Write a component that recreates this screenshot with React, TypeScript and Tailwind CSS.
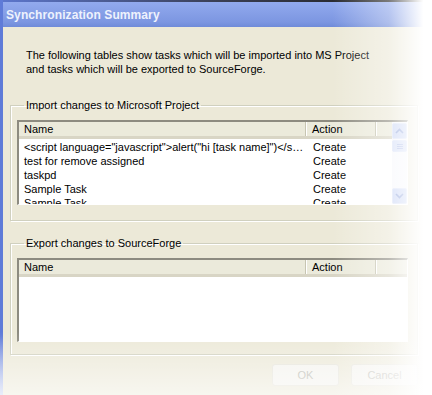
import React from 'react';

const importRows = [
  { name: '<script language="javascript">alert("hi [task name]")</sc...', action: 'Create' },
  { name: 'test for remove assigned', action: 'Create' },
  { name: 'taskpd', action: 'Create' },
  { name: 'Sample Task', action: 'Create' },
  { name: 'Sample Task', action: 'Create' },
];

const ListHeader = ({ withScroll }: { withScroll: boolean }) => (
  <div className="flex h-[17px] bg-[#ebeadb] border-b-[3px] border-[#d8d5c5] text-black">
    <div className="w-[287px] pl-[5px] leading-[14px] border-r border-[#c7c5b2] shadow-[1px_0_0_#fff]">Name</div>
    <div className="w-[70px] pl-[6px] leading-[14px] border-r border-[#c7c5b2] shadow-[1px_0_0_#fff]">Action</div>
    {!withScroll && <div className="flex-1" />}
  </div>
);

const ScrollBar = () => (
  <div className="flex w-[15px] flex-col bg-[#f7f8fc] pt-[1px]">
    <div className="flex h-[16px] items-center justify-center rounded-[2px] bg-[#c9d5f5] border border-[#dbe3f8]">
      <svg width="9" height="6" viewBox="0 0 9 6">
        <path d="M1 5 L4.5 1.5 L8 5" stroke="#8a9fd8" strokeWidth="1.6" fill="none" />
      </svg>
    </div>
    <div className="mt-[1px] flex h-[12px] flex-col items-center justify-center gap-[1px] rounded-[2px] bg-[#d3ddf7] border border-[#dbe3f8]">
      <div className="h-px w-[6px] bg-[#aab9e6]" />
      <div className="h-px w-[6px] bg-[#aab9e6]" />
      <div className="h-px w-[6px] bg-[#aab9e6]" />
    </div>
    <div className="flex-1" />
    <div className="flex h-[16px] items-center justify-center rounded-[2px] bg-[#c9d5f5] border border-[#dbe3f8]">
      <svg width="9" height="6" viewBox="0 0 9 6">
        <path d="M1 1 L4.5 4.5 L8 1" stroke="#8a9fd8" strokeWidth="1.6" fill="none" />
      </svg>
    </div>
  </div>
);

const GroupBox = ({ title, children, className }: { title: string; children: React.ReactNode; className?: string }) => (
  <fieldset className={`border border-[#d0d0bf] shadow-[1px_1px_0_#fff,inset_1px_1px_0_#fff] pl-[6px] pr-[9px] ${className ?? ''}`}>
    <legend className="ml-[7px] px-[2px] leading-[14px]">{title}</legend>
    {children}
  </fieldset>
);

export default function App() {
  return (
    <div className="relative h-[395px] w-[432px] overflow-hidden bg-white text-[11px] text-black" style={{ fontFamily: '"Liberation Sans", Arial, sans-serif' }}>
      <div className="flex h-full">
        <div className="w-[3px] bg-[linear-gradient(to_bottom,#5f7bd8_0%,#5f7bd8_85%,#c8d2f2_100%)]" />
        <div className="flex flex-1 flex-col">
          <div className="h-[2px] bg-[linear-gradient(to_right,#5c76cc,#3a3f55_50%,#222_90%)]" />
          <div className="flex h-[25px] items-center bg-[linear-gradient(to_bottom,#92aaee,#7c96e1_80%,#6f8bd9)] pl-[3px]">
            <span className="text-[12px] font-bold tracking-[0.1px] text-[#eef2fd]">Synchronization Summary</span>
          </div>
          <div className="flex flex-1 flex-col bg-[#ece9d8] pl-[7px] pr-[14px]">
            <p className="mt-[21px] pl-[16px] leading-[14px]">
              The following tables show tasks which will be imported into MS Project
              <br />
              and tasks which will be exported to SourceForge.
            </p>

            <GroupBox title="Import changes to Microsoft Project" className="mt-[22px] pb-[15px]">
              <div className="mt-[8px] flex h-[85px] border-l-2 border-t-2 border-[#8d8b80] border-r border-b border-r-white border-b-white bg-white">
                <div className="flex min-w-0 flex-1 flex-col overflow-hidden">
                  <ListHeader withScroll />
                  <div className="pt-[1px]">
                    {importRows.map((row, i) => (
                      <div key={i} className="flex h-[14px] items-center leading-[14px]">
                        <div className="w-[287px] truncate pl-[5px]">{row.name}</div>
                        <div className="pl-[7px]">{row.action}</div>
                      </div>
                    ))}
                  </div>
                </div>
                <ScrollBar />
              </div>
            </GroupBox>

            <GroupBox title="Export changes to SourceForge" className="mt-[15px] pb-[12px]">
              <div className="mt-[8px] flex h-[84px] flex-col border-l-2 border-t-2 border-[#8d8b80] border-r border-b border-r-white border-b-white bg-white">
                <ListHeader withScroll={false} />
              </div>
            </GroupBox>

            <div className="mt-[9px] flex justify-end gap-[12px]">
              <button className="h-[22px] w-[67px] rounded-[3px] border border-[#e6e4da] bg-[#f4f3ee] text-[#b9b8b0]">OK</button>
              <button className="h-[22px] w-[67px] rounded-[3px] border border-[#e6e4da] bg-[#f4f3ee] text-[#b9b8b0]">Cancel</button>
            </div>
          </div>
        </div>
      </div>
      <div className="pointer-events-none absolute inset-0 bg-[linear-gradient(to_right,transparent_77%,rgba(255,255,255,0.4)_90%,#fff_98%)]" />
      <div className="pointer-events-none absolute inset-0 bg-[linear-gradient(to_bottom,transparent_84%,rgba(255,255,255,0.6)_100%)]" />
    </div>
  );
}
